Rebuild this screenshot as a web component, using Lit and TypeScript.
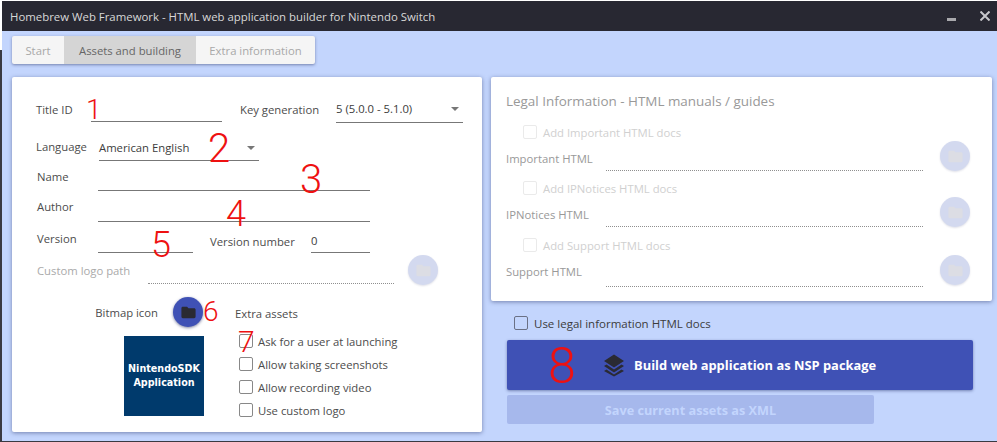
import { LitElement, html, css, svg } from "lit";
import { customElement } from "lit/decorators.js";

const folder = svg`<svg class="folder" viewBox="0 0 24 24"><path d="M10 4H4c-1.100 0-2 .9-2 2v12c0 1.100.9 2 2 2h16c1.100 0 2-.9 2-2V8c0-1.100-.9-2-2-2h-8l-2-2z"/></svg>`;

@customElement("app-root")
export class AppRoot extends LitElement {
  static styles = css`
    :host { display: block; width: 997px; height: 442px; overflow: hidden; font-family: "Open Sans", "Noto Sans", sans-serif; font-size: 11.3px; color: #4c4c4c; }
    * { box-sizing: border-box; }
    .root { position: relative; width: 997px; height: 442px; padding: 1px 0 1px 2px; background: linear-gradient(#fff 50px, #3a3a42 50px); }
    .window { height: 440px; background: #c3d5fd; display: flex; flex-direction: column; }
    .title { height: 30px; flex: none; background: #282832; color: #d8d8d8; display: flex; align-items: center; padding-left: 8px; font-size: 11.4px; }
    .title span { flex: 1; }
    .winbtn { height: 10px; flex: none; }
    .min { width: 9px; margin-right: 24px; margin-top: 7px; height: 3px; background: #a9a9ad; }
    .close { width: 10px; margin-right: 7px; fill: none; stroke: #c8c8cc; stroke-width: 2; }
    .tabs { margin: 5px 0 0 10px; width: 303px; height: 28px; display: flex; background: #f5f5f5; border-radius: 2px; box-shadow: 0 1px 3px rgba(40,50,100,.5); color: #a8a8a8; flex: none; }
    .tabs div { display: flex; align-items: center; justify-content: center; }
    .tabs .t1 { width: 52px; }
    .tabs .t2 { width: 132px; background: #d5d5d5; color: #666; }
    .tabs .t3 { width: 119px; }
    .cols { display: grid; grid-template-columns: 470px 501px; column-gap: 9px; margin: 13px 0 0 10px; align-items: start; }
    .card { background: #fff; border-radius: 2px; box-shadow: 0 1px 4px rgba(40,50,100,.5); }
    .left { height: 355px; padding: 15px 0 0 24px; }
    .row { display: flex; align-items: flex-end; }
    .lbl { flex: none; white-space: nowrap; }
    .field { flex: none; border-bottom: 1px solid #777; height: 20px; display: flex; align-items: center; justify-content: space-between; color: #3c3c3c; white-space: nowrap; }
    .dotted { flex: none; border-bottom: 1px dotted #8f8f8f; height: 20px; }
    .caret { width: 0; height: 0; border: 4px solid transparent; border-top: 4px solid #777; border-bottom: 0; margin-right: 4px; }
    .r1 { height: 31px; }
    .r1 .a { width: 55px; padding-bottom: 6px; }
    .r1 .b { width: 131px; margin-bottom: 1px; }
    .r1 .c { width: 96px; margin-left: 18px; padding-bottom: 6px; }
    .r1 .d { width: 127px; padding-bottom: 8px; }
    .r2 { height: 38px; }
    .r2 .a { width: 63px; padding-bottom: 7px; }
    .r2 .b { width: 160px; padding-bottom: 6px; }
    .r3 { height: 30px; margin-left: 1px; }
    .r4 { height: 31px; margin-left: 1px; }
    .r3 .a { width: 61px; padding-bottom: 7px; }
    .r4 .a { width: 61px; padding-bottom: 8px; }
    .r3 .b, .r4 .b { width: 272px; }
    .r5 { height: 31px; margin-left: 1px; }
    .r5 .a { width: 61px; padding-bottom: 7px; }
    .r5 .b { width: 95px; }
    .r5 .c { width: 101px; margin-left: 17px; padding-bottom: 4px; }
    .r5 .d { width: 59px; padding-bottom: 5px; }
    .r6 { height: 31px; margin-left: 1px; color: #aaa; }
    .r6 .a { width: 111px; padding-bottom: 6px; }
    .r6 .b { width: 246px; }
    .fab { flex: none; width: 30px; height: 30px; border-radius: 50%; display: flex; align-items: center; justify-content: center; }
    .fab.off { background: #d3d9ef; box-shadow: 0 1px 2px rgba(40,50,100,.15); }
    .fab.on { background: #3f51b5; box-shadow: 0 1px 3px rgba(20,30,90,.55); }
    .folder { width: 17px; height: 17px; }
    .off .folder { fill: #dcdde4; }
    .on .folder { fill: #2a2a33; }
    .r6 .fab { margin-left: 14px; margin-bottom: -1px; }
    .lower { display: grid; grid-template-columns: 199px 1fr; margin-top: 13px; }
    .bm { width: 168px; display: flex; flex-direction: column; align-items: flex-end; }
    .bmtop { display: flex; align-items: center; height: 30px; margin-right: 1px; }
    .bmtop .fab { margin-left: 15px; }
    .logo { margin-top: 9px; width: 80px; height: 80px; background: #003a6c; color: #fff; font-weight: 700; line-height: 14px; display: flex; flex-direction: column; align-items: center; justify-content: center; font-family: "DejaVu Sans", sans-serif; font-size: 9.6px; }
    .extra { padding-top: 9px; font-size: 11.3px; }
    .checks { margin: 13px 0 0 4px; display: flex; flex-direction: column; gap: 9px; }
    .chk { display: flex; align-items: center; height: 14px; white-space: nowrap; }
    .box { width: 14px; height: 14px; border: 1.5px solid #888; border-radius: 2px; margin-right: 5px; flex: none; }
    .right { height: 224px; padding: 14px 0 0 15px; color: #999; }
    .right h2 { margin: 0; font-size: 13.45px; font-weight: 400; color: #999; line-height: 20px; }
    .sub { display: flex; align-items: center; height: 14px; margin-left: 17px; color: #d0d0d0; }
    .sub .box { border-color: #eaeaea; margin-right: 6px; }
    .s1 { margin-top: 14px; }
    .lrow { display: flex; align-items: flex-end; height: 32px; }
    .lrow .a { width: 100px; padding-bottom: 5px; }
    .lrow .b { width: 317px; }
    .lrow .fab { margin-left: 17px; margin-bottom: 0; }
    .s2 { margin-top: 10px; }
    .s3 { margin-top: 11px; }
    .lrow.s3row { height: 35px; }
    .lrow.s3row .a { padding-bottom: 8px; }
    .lrow.s3row .fab { margin-bottom: 2px; }
    .below { display: flex; flex-direction: column; }
    .use { display: flex; align-items: center; height: 14px; margin: 15px 0 0 23px; color: #3c3c3c; font-size: 11.5px; }
    .use .box { border-color: #6a7085; margin-right: 6px; }
    .build { margin: 10px 0 0 16px; width: 466px; height: 50px; background: #3f51b5; border-radius: 2px; box-shadow: 0 1px 3px rgba(20,30,90,.45); color: #fff; font-weight: 700; font-size: 12.9px; display: flex; align-items: center; padding-left: 95px; }
    .build svg { width: 24px; height: 24px; margin-right: 8px; fill: #2a2a33; }
    .save { margin: 5px 0 0 16px; width: 367px; height: 29px; background: #a6b8ec; border-radius: 2px; color: #c3d5fd; font-weight: 700; font-size: 12.7px; display: flex; align-items: center; justify-content: center; }
    .ink { position: absolute; color: #ee1111; font-family: Roboto, "Liberation Sans", sans-serif; font-weight: 300; line-height: 1; pointer-events: none; }
  `;

  private legal(sub: string, label: string, cls: string) {
    return html`
      <div class="sub ${cls}"><div class="box"></div>${sub}</div>
      <div class="lrow ${cls}row"><div class="lbl a">${label}</div><div class="dotted b"></div><div class="fab off">${folder}</div></div>`;
  }

  render() {
    const marks: [string, number, number, number][] = [
      ["1", 86, 96, 28], ["2", 208, 129, 40], ["3", 300, 160, 40], ["4", 226, 196, 36],
      ["5", 151, 227, 36], ["6", 203, 298, 28], ["7", 238, 327, 30], ["8", 548, 341, 50],
    ];
    return html`<div class="root">
      <div class="window">
        <div class="title"><span>Homebrew Web Framework - HTML web application builder for Nintendo Switch</span>
          <div class="winbtn min"></div>
          <svg class="winbtn close" viewBox="0 0 10 10"><path d="M.5.5l9 9M9.5.5l-9 9"/></svg>
        </div>
        <div class="tabs"><div class="t1">Start</div><div class="t2">Assets and building</div><div class="t3">Extra information</div></div>
        <div class="cols">
          <div class="card left">
            <div class="row r1"><div class="lbl a">Title ID</div><div class="field b"></div><div class="lbl c">Key generation</div><div class="field d"><span>5 (5.0.0 - 5.1.0)</span><i class="caret"></i></div></div>
            <div class="row r2"><div class="lbl a">Language</div><div class="field b"><span>American English</span><i class="caret"></i></div></div>
            <div class="row r3"><div class="lbl a">Name</div><div class="field b"></div></div>
            <div class="row r4"><div class="lbl a">Author</div><div class="field b"></div></div>
            <div class="row r5"><div class="lbl a">Version</div><div class="field b"></div><div class="lbl c">Version number</div><div class="field d">0</div></div>
            <div class="row r6"><div class="lbl a">Custom logo path</div><div class="dotted b"></div><div class="fab off">${folder}</div></div>
            <div class="lower">
              <div class="bm">
                <div class="bmtop"><div class="lbl">Bitmap icon</div><div class="fab on">${folder}</div></div>
                <div class="logo"><span>NintendoSDK</span><span>Application</span></div>
              </div>
              <div class="extra">
                <div class="lbl">Extra assets</div>
                <div class="checks">
                  <div class="chk"><div class="box"></div>Ask for a user at launching</div>
                  <div class="chk"><div class="box"></div>Allow taking screenshots</div>
                  <div class="chk"><div class="box"></div>Allow recording video</div>
                  <div class="chk"><div class="box"></div>Use custom logo</div>
                </div>
              </div>
            </div>
          </div>
          <div class="below">
            <div class="card right">
              <h2>Legal Information - HTML manuals / guides</h2>
              ${this.legal("Add Important HTML docs", "Important HTML", "s1")}
              ${this.legal("Add IPNotices HTML docs", "IPNotices HTML", "s2")}
              ${this.legal("Add Support HTML docs", "Support HTML", "s3")}
            </div>
            <div class="use"><div class="box"></div>Use legal information HTML docs</div>
            <div class="build"><svg viewBox="0 0 24 24"><path d="M12 1.500 22 8l-10 6.500L2 8zM4.500 11.500 12 16.500l7.500-5L22 13l-10 6.500L2 13zM4.500 16.500 12 21.500l7.500-5L22 18l-10 5.500L2 18z"/></svg>Build web application as NSP package</div>
            <div class="save">Save current assets as XML</div>
          </div>
        </div>
      </div>
      ${marks.map(([t, x, y, s]) => html`<div class="ink" style="left:${x}px;top:${y}px;font-size:${s}px">${t}</div>`)}
    </div>`;
  }
}
